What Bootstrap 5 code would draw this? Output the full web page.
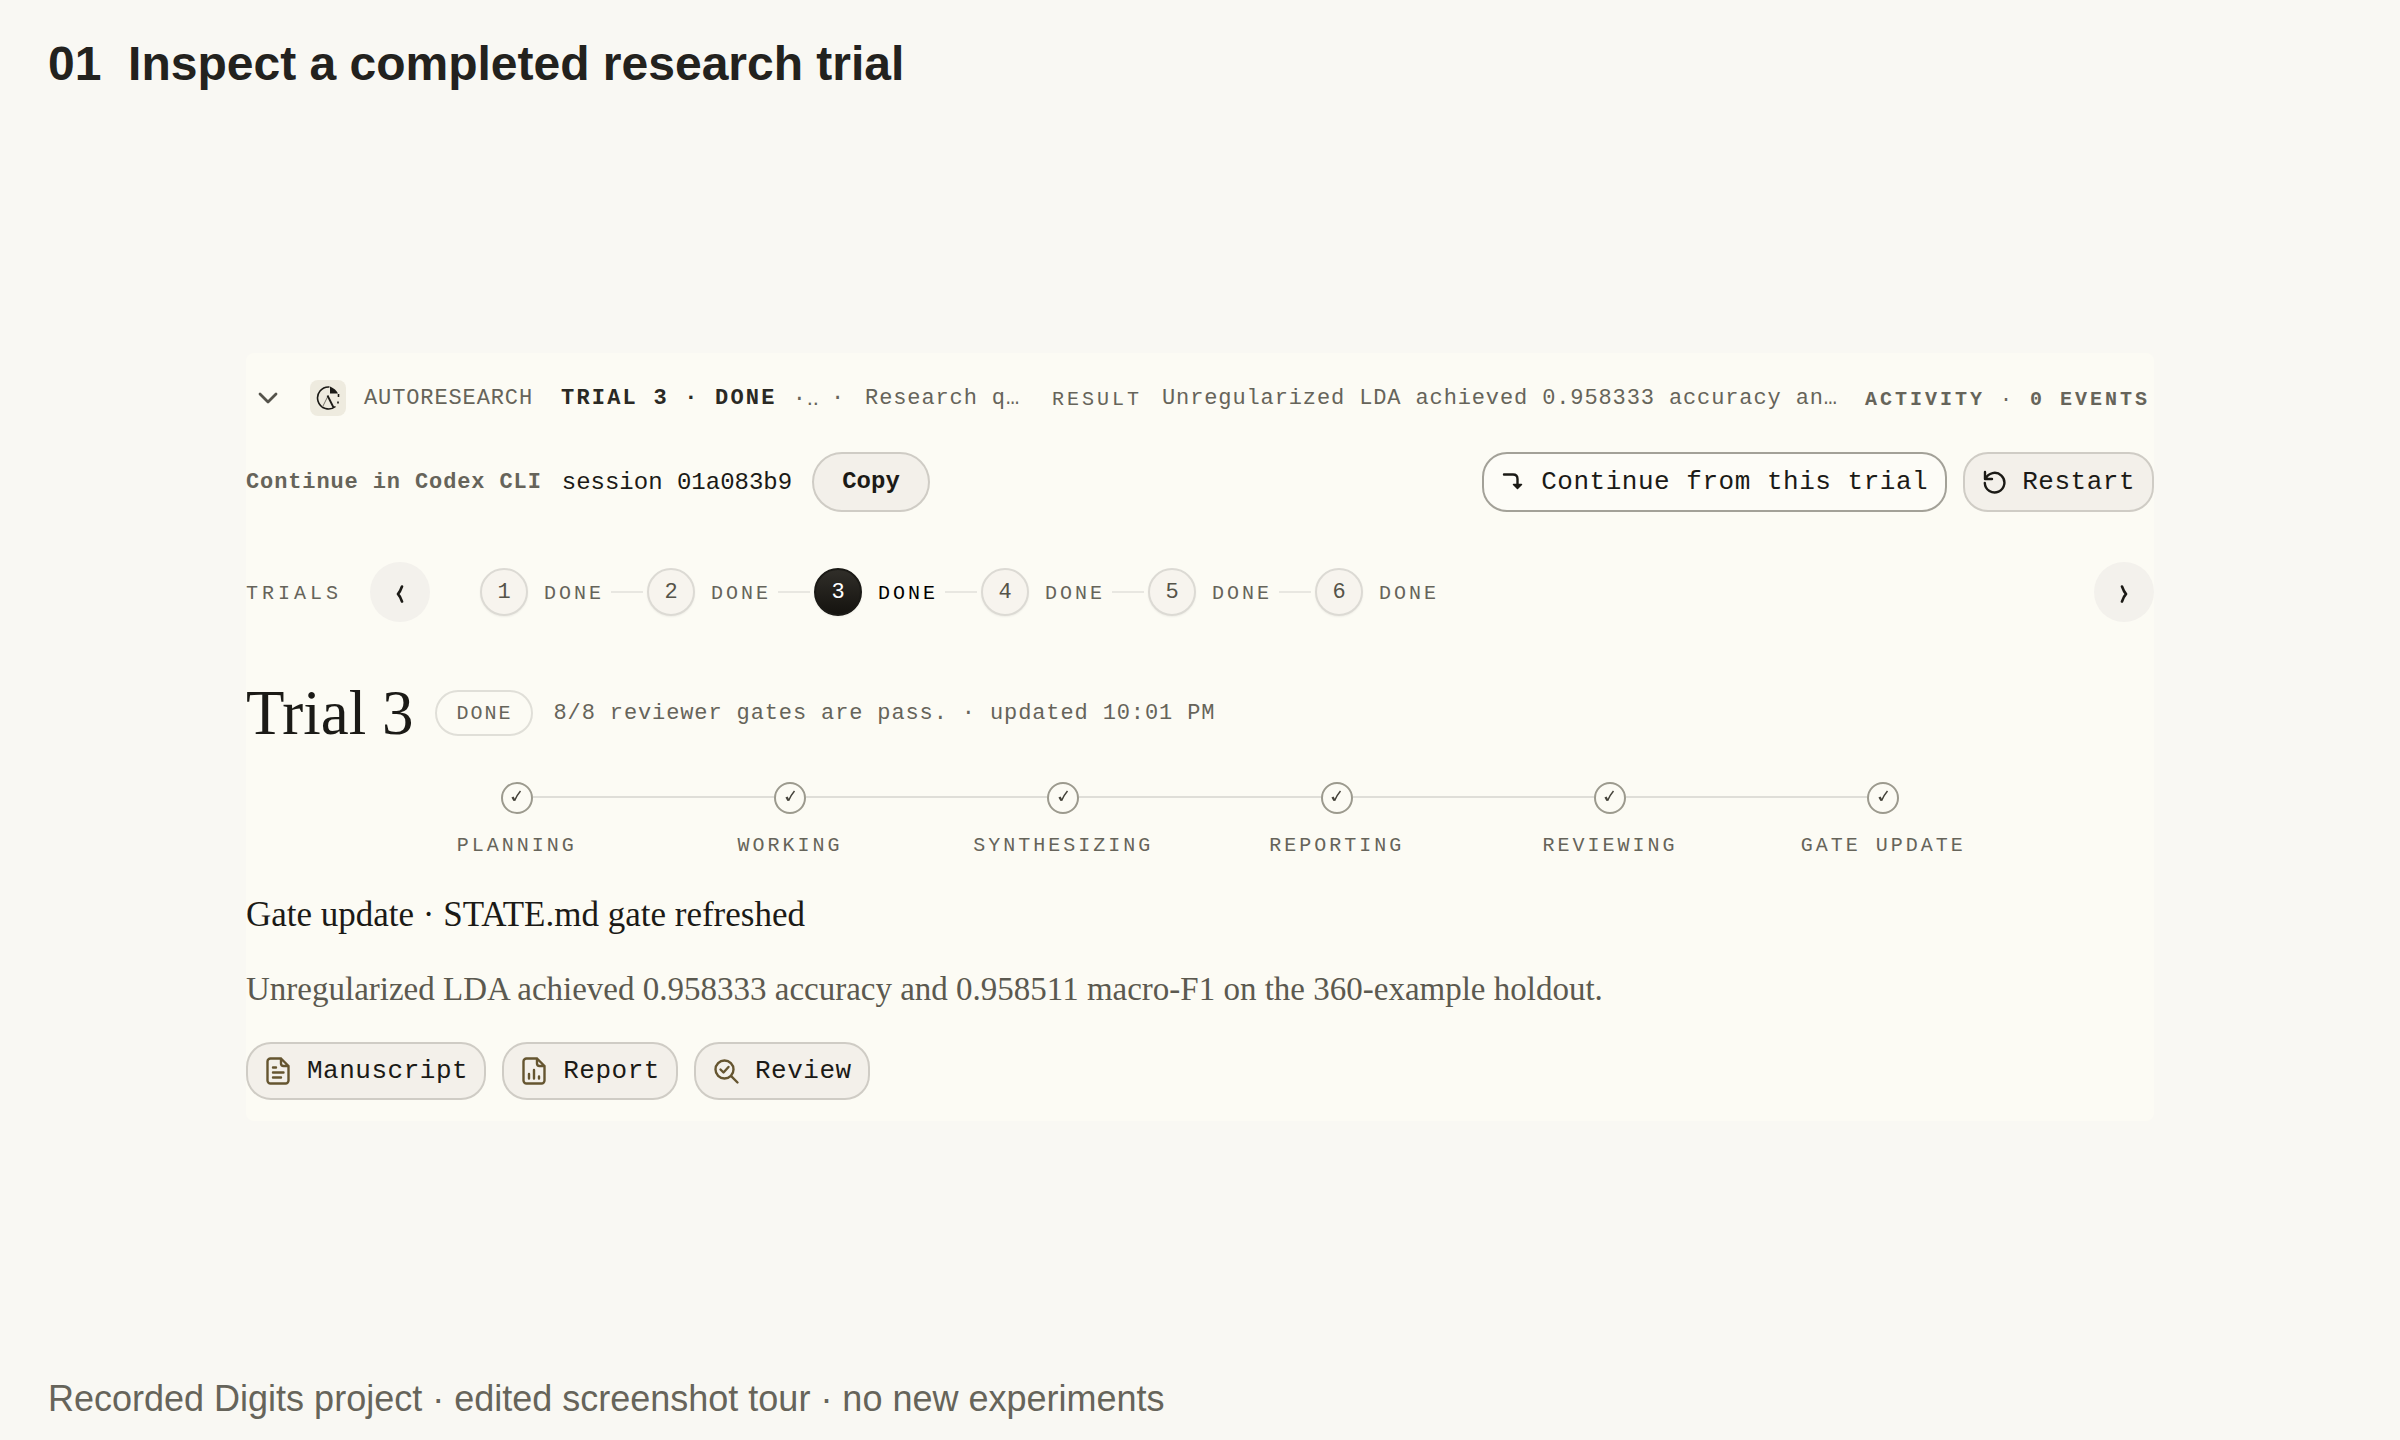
<!DOCTYPE html>
<html lang="en">
<head>
<meta charset="utf-8">
<meta name="viewport" content="width=device-width, initial-scale=1">
<title>Inspect a completed research trial</title>
<link href="https://cdn.jsdelivr.net/npm/bootstrap@5.3.0/dist/css/bootstrap.min.css" rel="stylesheet">
<style>
:root{--ink:#1b1a16;--soft:#66645a;--line:#dfded8;--fill:#f3f0ea;--mono:"Liberation Mono","Courier New",monospace;--serif:"Liberation Serif","Times New Roman",serif}
body{background:#f9f8f3;color:var(--ink);font-family:"Liberation Sans",Arial,sans-serif}
.page-head{padding:36px 48px 4px}
.page-head h1{font-size:48px;line-height:56px;font-weight:700;color:#23221e;white-space:pre-wrap}
.page-foot{padding:0 48px 19px;font-size:36px;line-height:44px;color:var(--soft)}
.trial-panel{margin:0 246px;padding:15px 0 21px;background:#fcfbf4;border-radius:8px;font-family:var(--mono)}
.trial-panel button{font-family:var(--mono)}
.meta{font-size:22px;line-height:32px;padding-top:2px;letter-spacing:.04em;color:var(--soft);white-space:nowrap}
.meta-strong{letter-spacing:.1em;font-weight:700;color:#2a2924}
.cap{font-size:20px;line-height:24px;letter-spacing:3px;color:var(--soft);white-space:nowrap;text-transform:uppercase}
.summary{height:60px}
.toggle{width:44px;height:44px;margin-right:20px}
.logo{width:36px;height:36px;border-radius:8px;background:#eeebdf;margin-right:18px}
.dots{font-family:"Liberation Sans",sans-serif;letter-spacing:0}
.gap-wide{gap:20px}
.session{font-size:24px;line-height:32px;padding-top:2px;color:var(--ink)}
.pill{height:60px;border:2px solid #cfccc5;border-radius:25px;background:var(--fill);color:var(--ink);font-size:26px;letter-spacing:.02em;line-height:32px;padding:1px 17px 0;white-space:nowrap}
.pill-copy{border-radius:30px;font-size:24px;letter-spacing:0;font-weight:700;padding:1px 28px 0}
.pill-outline{background:#fdfcf7;border-color:#a3a198}
.pill-doc{height:58px;padding:1px 16px 0}
.pill-doc svg{color:#655530;margin-right:15px}
.round-btn{width:60px;height:60px;background:#f3f1ec;color:var(--ink)}
.round-btn svg{margin-top:6px}
.trials{margin-top:50px}
.num{width:48px;height:48px;border:2px solid #dcdad4;background:#f7f4ee;color:#555349;font-size:22px;line-height:24px;padding:2px 0 0;box-shadow:0 1px 2px rgba(0,0,0,.06)}
.num.current{background:linear-gradient(#302e29,#15130f);border-color:#1b1a16;color:#fff}
.hop{width:32px;height:2px;background:#e8e7e1;margin:0 4px 0 7px}
.trial-title{font-family:var(--serif);font-size:63px;line-height:64px;font-weight:400}
.state{height:46px;border:2px solid #e0dfd8;border-radius:23px;padding:2px 19px 0;margin-left:22px;letter-spacing:2px}
.stages{max-width:1640px;margin:37px auto 0}
.stage .rail{height:2px;background:var(--line);margin-bottom:2px}
.stage:first-child .rail:first-child,.stage:last-child .rail:last-child{visibility:hidden}
.tick{width:32px;height:32px;border:2px solid #9c9a8e;color:#45433b;padding-bottom:3px}
.note{font-family:var(--serif);line-height:44px}
.note-head{font-size:35px;margin-top:35px}
.note-body{font-size:33px;margin-top:30px;color:#5b594f}
</style>
</head>
<body class="d-flex flex-column min-vh-100 m-0">
<header class="page-head"><h1 class="m-0">01  Inspect a completed research trial</h1></header>

<main class="flex-grow-1 d-flex flex-column justify-content-center">
<section class="trial-panel" aria-label="Trial 3">

  <div class="summary d-flex align-items-center">
    <button class="toggle btn p-0 border-0 d-flex align-items-center justify-content-center" aria-label="Collapse">
      <svg width="20" height="12" viewBox="0 0 20 12" fill="none" stroke="#55534b" stroke-width="2.800" stroke-linecap="round" stroke-linejoin="round"><path d="M2 2l8 8 8-8"/></svg>
    </button>
    <span class="logo d-flex align-items-center justify-content-center flex-shrink-0">
      <svg width="24" height="26" viewBox="0 0 24 26" fill="none" stroke="#1b1a16"><path d="M13.500 2A11 11 0 1 0 19.500 21.500" stroke-width="1.600"/><path d="M14 1.500v7h8q-2-4.500-8-7z" fill="#1b1a16" stroke="none"/><path d="M6.500 22l5.500-11" stroke="#77746a" stroke-width="1"/><path d="M11.500 10.500l6 12" stroke-width="1.800"/><path d="M22.500 9v3M22 16.500v2" stroke-width="1.600"/></svg>
    </span>
    <span class="meta">AUTORESEARCH</span>
    <span class="meta meta-strong ms-4 ps-1">TRIAL 3 · DONE</span>
    <span class="meta ms-3">·<span class="dots">..</span></span>
    <span class="meta ms-2 ps-1">·</span>
    <span class="meta ms-3 ps-1">Research q…</span>
    <span class="cap ms-4 ps-2 pt-1">Result</span>
    <span class="meta ms-3 ps-1">Unregularized LDA achieved 0.958333 accuracy an…</span>
    <span class="cap fw-bold ms-auto pt-1 pe-1">Activity <span class="fw-normal">·</span> 0 events</span>
  </div>

  <div class="d-flex align-items-center mt-4">
    <div class="d-flex align-items-center gap-wide">
      <span class="meta fw-bold">Continue in Codex CLI</span>
      <span class="session">session 01a083b9</span>
      <button class="pill pill-copy">Copy</button>
    </div>
    <div class="d-flex ms-auto gap-3">
      <button class="pill pill-outline d-flex align-items-center">
        <svg class="me-3" width="24" height="24" viewBox="0 0 24 24" fill="none" stroke="currentColor" stroke-width="2.400" stroke-linecap="round" stroke-linejoin="round"><path d="M3 4.500h9q4.500 0 4.500 4.500v8"/><path d="M12.500 14.500l4 4 4-4z" fill="currentColor" stroke-width="1.500"/></svg>Continue from this trial</button>
      <button class="pill d-flex align-items-center">
        <svg class="me-3" width="24" height="24" viewBox="0 0 24 24" fill="none" stroke="currentColor" stroke-width="2.400" stroke-linecap="round" stroke-linejoin="round"><path d="M3 2v7h7M3.500 9A9.800 9.800 0 1 1 2.800 13"/></svg>Restart</button>
    </div>
  </div>

  <div class="trials d-flex align-items-center">
    <span class="cap pt-1" style="letter-spacing:4px">Trials</span>
    <button class="round-btn btn rounded-circle p-0 border-0" style="margin:0 50px 0 28px" aria-label="Previous"><svg width="8" height="18" viewBox="0 0 8 18" fill="none" stroke="currentColor" stroke-width="2.600" stroke-linecap="round" stroke-linejoin="round"><path d="M6 1.500Q4 7 2 9q2 2 4 7.500"/></svg></button>
    <div class="d-flex align-items-center">
      <button class="num btn rounded-circle">1</button><span class="cap ms-3 pt-1">Done</span><span class="hop"></span>
      <button class="num btn rounded-circle">2</button><span class="cap ms-3 pt-1">Done</span><span class="hop"></span>
      <button class="num current btn rounded-circle">3</button><span class="cap ms-3 pt-1 text-black">Done</span><span class="hop"></span>
      <button class="num btn rounded-circle">4</button><span class="cap ms-3 pt-1">Done</span><span class="hop"></span>
      <button class="num btn rounded-circle">5</button><span class="cap ms-3 pt-1">Done</span><span class="hop"></span>
      <button class="num btn rounded-circle">6</button><span class="cap ms-3 pt-1">Done</span>
    </div>
    <button class="round-btn btn rounded-circle p-0 border-0 ms-auto" aria-label="Next"><svg width="8" height="18" viewBox="0 0 8 18" fill="none" stroke="currentColor" stroke-width="2.600" stroke-linecap="round" stroke-linejoin="round"><path d="M2 1.500Q4 7 6 9q-2 2-4 7.500"/></svg></button>
  </div>

  <div class="d-flex align-items-center" style="margin-top:59px">
    <h2 class="trial-title m-0">Trial 3</h2>
    <span class="state cap d-flex align-items-center">Done</span>
    <span class="meta ms-3 ps-1">8/8 reviewer gates are pass. · updated 10:01 PM</span>
  </div>

  <ol class="stages row g-0 list-unstyled">
    <li class="stage col text-center"><div class="d-flex align-items-center"><span class="rail flex-fill"></span><span class="tick rounded-circle d-flex align-items-center justify-content-center"><svg width="11" height="12" viewBox="0 0 11 12" fill="none" stroke="currentColor"><path d="M1.500 7l2 3.500" stroke-width="2.400"/><path d="M3.500 10.800Q6 5 9.500 1" stroke-width="1.500"/></svg></span><span class="rail flex-fill"></span></div><div class="cap mt-3 pt-1">Planning</div></li>
    <li class="stage col text-center"><div class="d-flex align-items-center"><span class="rail flex-fill"></span><span class="tick rounded-circle d-flex align-items-center justify-content-center"><svg width="11" height="12" viewBox="0 0 11 12" fill="none" stroke="currentColor"><path d="M1.500 7l2 3.500" stroke-width="2.400"/><path d="M3.500 10.800Q6 5 9.500 1" stroke-width="1.500"/></svg></span><span class="rail flex-fill"></span></div><div class="cap mt-3 pt-1">Working</div></li>
    <li class="stage col text-center"><div class="d-flex align-items-center"><span class="rail flex-fill"></span><span class="tick rounded-circle d-flex align-items-center justify-content-center"><svg width="11" height="12" viewBox="0 0 11 12" fill="none" stroke="currentColor"><path d="M1.500 7l2 3.500" stroke-width="2.400"/><path d="M3.500 10.800Q6 5 9.500 1" stroke-width="1.500"/></svg></span><span class="rail flex-fill"></span></div><div class="cap mt-3 pt-1">Synthesizing</div></li>
    <li class="stage col text-center"><div class="d-flex align-items-center"><span class="rail flex-fill"></span><span class="tick rounded-circle d-flex align-items-center justify-content-center"><svg width="11" height="12" viewBox="0 0 11 12" fill="none" stroke="currentColor"><path d="M1.500 7l2 3.500" stroke-width="2.400"/><path d="M3.500 10.800Q6 5 9.500 1" stroke-width="1.500"/></svg></span><span class="rail flex-fill"></span></div><div class="cap mt-3 pt-1">Reporting</div></li>
    <li class="stage col text-center"><div class="d-flex align-items-center"><span class="rail flex-fill"></span><span class="tick rounded-circle d-flex align-items-center justify-content-center"><svg width="11" height="12" viewBox="0 0 11 12" fill="none" stroke="currentColor"><path d="M1.500 7l2 3.500" stroke-width="2.400"/><path d="M3.500 10.800Q6 5 9.500 1" stroke-width="1.500"/></svg></span><span class="rail flex-fill"></span></div><div class="cap mt-3 pt-1">Reviewing</div></li>
    <li class="stage col text-center"><div class="d-flex align-items-center"><span class="rail flex-fill"></span><span class="tick rounded-circle d-flex align-items-center justify-content-center"><svg width="11" height="12" viewBox="0 0 11 12" fill="none" stroke="currentColor"><path d="M1.500 7l2 3.500" stroke-width="2.400"/><path d="M3.500 10.800Q6 5 9.500 1" stroke-width="1.500"/></svg></span><span class="rail flex-fill"></span></div><div class="cap mt-3 pt-1">Gate update</div></li>
  </ol>

  <h3 class="note note-head mb-0 fw-normal">Gate update · STATE.md gate refreshed</h3>
  <p class="note note-body mb-0">Unregularized LDA achieved 0.958333 accuracy and 0.958511 macro-F1 on the 360-example holdout.</p>

  <div class="d-flex gap-3" style="margin-top:31px">
    <button class="pill pill-doc d-flex align-items-center">
      <svg width="28" height="28" viewBox="0 0 28 28" fill="none" stroke="currentColor" stroke-width="2.400" stroke-linecap="round" stroke-linejoin="round"><path d="M17 1.500H6.500a3 3 0 0 0-3 3v19a3 3 0 0 0 3 3h15a3 3 0 0 0 3-3V9zM17 1.500V6.500a2.500 2.500 0 0 0 2.500 2.500h5M9 10.500h3M9 15.500h10.500M9 20.500h8"/></svg>Manuscript</button>
    <button class="pill pill-doc d-flex align-items-center">
      <svg width="28" height="28" viewBox="0 0 28 28" fill="none" stroke="currentColor" stroke-width="2.400" stroke-linecap="round" stroke-linejoin="round"><path d="M17 1.500H6.500a3 3 0 0 0-3 3v19a3 3 0 0 0 3 3h15a3 3 0 0 0 3-3V9zM17 1.500V6.500a2.500 2.500 0 0 0 2.500 2.500h5M9 17v4.500M14 13v8.500M19 19.500v2"/></svg>Report</button>
    <button class="pill pill-doc d-flex align-items-center">
      <svg width="28" height="28" viewBox="0 0 28 28" fill="none" stroke="currentColor" stroke-width="2.400" stroke-linecap="round" stroke-linejoin="round"><circle cx="12.500" cy="12.500" r="9"/><path d="M19.200 19.200l6.300 6.300M8.500 12.500l3 3 5-5.500"/></svg>Review</button>
  </div>
</section>
</main>

<footer class="page-foot">Recorded Digits project · edited screenshot tour · no new experiments</footer>
<script src="https://cdn.jsdelivr.net/npm/bootstrap@5.3.0/dist/js/bootstrap.bundle.min.js"></script>
</body>
</html>
